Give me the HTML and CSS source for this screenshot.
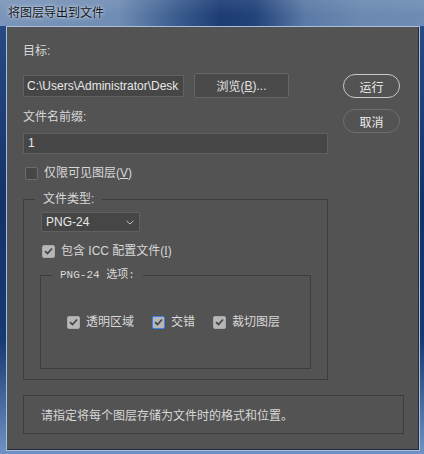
FILE: index.html
```html
<!DOCTYPE html>
<html lang="zh-CN">
<head>
<meta charset="utf-8">
<title>将图层导出到文件</title>
<link rel="stylesheet" href="styles.css">
</head>
<body>
<div class="window">
  <div class="titlebar"><span class="title">将图层导出到文件</span></div>
  <div class="panel">
    <div class="top">
      <div class="main">
        <div class="label">目标:</div>
        <div class="path-row">
          <div class="input path">C:\Users\Administrator\Desk</div>
          <div class="btn browse">浏览(<u>B</u>)...</div>
        </div>
        <div class="label prefix-label">文件名前缀:</div>
        <div class="input prefix">1</div>
        <div class="check-row visible-only"><span class="box"></span><span>仅限可见图层(<u>V</u>)</span></div>
        <fieldset class="group outer">
          <legend>文件类型:</legend>
          <div class="select"><span>PNG-24</span><svg class="chev" width="8" height="5" viewBox="0 0 8 5"><path d="M0.5 0.8 L4 4 L7.5 0.8" fill="none" stroke="#bdbdbd" stroke-width="1"/></svg></div>
          <div class="check-row icc"><span class="box checked"><svg width="9" height="8" viewBox="0 0 9 8"><path d="M1 4.2 L3.5 6.5 L8 1.5" fill="none" stroke="#474747" stroke-width="1.8"/></svg></span><span>包含 ICC 配置文件(<u>I</u>)</span></div>
          <fieldset class="group inner">
            <legend class="mono">PNG-24 选项:</legend>
            <div class="opts">
              <div class="check-row"><span class="box checked"><svg width="9" height="8" viewBox="0 0 9 8"><path d="M1 4.2 L3.5 6.5 L8 1.5" fill="none" stroke="#474747" stroke-width="1.8"/></svg></span><span>透明区域</span></div>
              <div class="check-row"><span class="box checked focus"><svg width="9" height="8" viewBox="0 0 9 8"><path d="M1 4.2 L3.5 6.5 L8 1.5" fill="none" stroke="#474747" stroke-width="1.8"/></svg></span><span>交错</span></div>
              <div class="check-row"><span class="box checked"><svg width="9" height="8" viewBox="0 0 9 8"><path d="M1 4.2 L3.5 6.5 L8 1.5" fill="none" stroke="#474747" stroke-width="1.8"/></svg></span><span>裁切图层</span></div>
            </div>
          </fieldset>
        </fieldset>
      </div>
      <div class="side">
        <div class="pill primary">运行</div>
        <div class="pill cancel">取消</div>
      </div>
    </div>
    <div class="info">请指定将每个图层存储为文件时的格式和位置。</div>
  </div>
</div>
</body>
</html>
```
FILE: styles.css
```css
* { box-sizing: border-box; }
html, body { margin: 0; padding: 0; }
body {
  font-family: "Liberation Sans", "Noto Sans CJK SC", sans-serif;
  font-size: 12px;
  color: #d8d8d8;
}
.window {
  width: 424px;
  height: 454px;
  overflow: hidden;
  background: linear-gradient(180deg, #2a4e86 0%, #13326a 45%, #163a72 75%, #6f93c4 100%);
}
.titlebar {
  height: 26px;
  padding-left: 8px;
  display: flex;
  align-items: center;
  background:
    linear-gradient(180deg, rgba(255,255,255,0.08), rgba(255,255,255,0) 60%),
    linear-gradient(90deg, #7a95b9 0%, #6f8cb3 28%, #3a5b8e 42%, #1d3c74 52%, #22427a 60%, #5b7aa6 72%, #6b89b1 85%, #6e8cb3 100%);
}
.title {
  color: #141414;
  font-size: 12px;
  line-height: 16px;
  text-shadow: 0 0 5px rgba(230,240,255,0.9), 0 0 2px rgba(230,240,255,0.7);
}
.panel {
  margin: 1px 5px 0 7px;
  height: 423px;
  background: #535353;
  border-right: 1px solid #1f2b3c;
  border-bottom: 1px solid #1f2b3c;
  box-shadow: 0 0 0 1px #a9bfdc;
}
.top {
  display: flex;
  padding: 16px 0 0 16px;
}
.main {
  width: 305px;
  display: flex;
  flex-direction: column;
}
.label {
  line-height: 16px;
  height: 16px;
}
.path-row {
  margin-top: 14px;
  display: flex;
  align-items: center;
  gap: 10px;
  height: 25px;
}
.input {
  background: #464646;
  border: 1px solid #606060;
  color: #e8e8e8;
  padding-left: 3px;
  white-space: nowrap;
  overflow: hidden;
}
.path {
  width: 161px;
  height: 22px;
  line-height: 20px;
}
.btn {
  background: #4a4a4a;
  border: 1px solid #666;
  border-radius: 2px;
  color: #e2e2e2;
  display: flex;
  align-items: center;
  justify-content: center;
}
.browse {
  width: 95px;
  height: 25px;
}
.prefix-label { margin-top: 11px; }
.prefix {
  margin-top: 8px;
  height: 21px;
  line-height: 19px;
  width: 305px;
  padding-left: 4px;
}
.check-row {
  display: flex;
  align-items: center;
  height: 16px;
  line-height: 16px;
  gap: 6px;
  white-space: nowrap;
}
.box {
  width: 13px;
  height: 13px;
  border-radius: 2px;
  background: #474747;
  border: 1px solid #6c6c6c;
  display: flex;
  align-items: center;
  justify-content: center;
  flex: none;
}
.box.checked {
  background: #b7b7b7;
  border-color: #a9a9a9;
}
.box.focus {
  border: 1px solid #3a82e6;
}
.visible-only {
  margin-top: 11px;
  padding-left: 2px;
}
.group {
  margin: 0;
  border: 1px solid #3d3d3d;
  min-width: 0;
}
.group > legend {
  padding: 0 8px;
  line-height: 16px;
  height: 16px;
}
.outer {
  margin-top: 10px;
  width: 305px;
  padding: 0 16px 10px 16px;
}
.outer > legend { margin-left: -5px; }
.select {
  margin: 5px 0 0 1px;
  width: 99px;
  height: 20px;
  background: #464646;
  border: 1px solid #606060;
  border-radius: 1px;
  color: #e8e8e8;
  display: flex;
  align-items: center;
  justify-content: space-between;
  padding: 0 5px 0 4px;
}
.chev { margin-top: 1px; }
.icc {
  margin-top: 11px;
  padding-left: 2px;
}
.inner {
  margin-top: 8px;
  padding: 0 0 38px 26px;
}
.inner > legend {
  margin-left: -15px;
}
.mono {
  font-family: "Liberation Mono", "Noto Sans CJK SC", monospace;
  font-size: 11px;
}
.opts {
  margin-top: 31px;
  display: flex;
  gap: 18px;
}
.side {
  margin-left: 15px;
  display: flex;
  flex-direction: column;
}
.pill {
  width: 57px;
  height: 24px;
  border-radius: 12px;
  display: flex;
  align-items: center;
  justify-content: center;
  color: #ececec;
  font-size: 12px;
}
.primary {
  margin-top: 31px;
  border: 1.5px solid #c9c9c9;
}
.cancel {
  margin-top: 11px;
  border: 1.5px solid #6e6e6e;
}
.info {
  margin: 15px 0 0 16px;
  width: 381px;
  height: 39px;
  border: 1px solid #3d3d3d;
  padding-left: 17px;
  display: flex;
  align-items: center;
}
u { text-decoration: underline; text-underline-offset: 1px; }
```
